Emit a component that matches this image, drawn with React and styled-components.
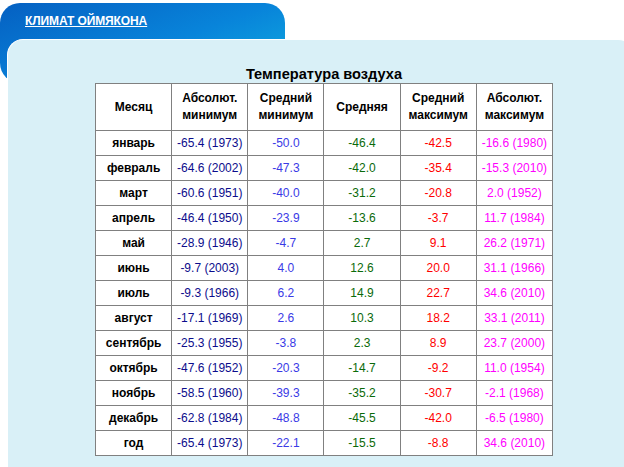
import styled, { createGlobalStyle } from 'styled-components';

const GlobalStyle = createGlobalStyle`
    html, body {
        margin: 0;
        padding: 0;
        background: #ffffff;
        overflow: hidden;
    }
    body {
        font-family: "Liberation Sans", Arial, sans-serif;
    }
`;

const Page = styled.div`
    width: 624px;
    height: 467px;
    padding-top: 3px;
    box-sizing: border-box;
    overflow: hidden;
`;

const Tab = styled.div`
    width: 285px;
    height: 80px;
    box-sizing: border-box;
    padding: 8px 0 0 25px;
    border-radius: 20px;
    background: linear-gradient(160deg, #0560c2 0%, #0884da 55%, #10aee0 100%);
`;

const TabLink = styled.a`
    color: #ffffff;
    font-size: 12px;
    font-weight: bold;
    letter-spacing: -0.1px;
    text-decoration: underline;
`;

const Panel = styled.div`
    margin: -44px -10px 0 7px;
    padding: 26px 0 40px 87px;
    background: #d9f0f7;
    border-top: 1px solid #ffffff;
    border-left: 1px solid #ffffff;
    border-radius: 16px 16px 0 0;
`;

const TableBox = styled.div`
    width: 458px;
`;

const Title = styled.div`
    text-align: center;
    font-size: 14.6px;
    font-weight: bold;
    line-height: 17px;
    color: #000000;
`;

const Table = styled.table`
    width: 458px;
    border-collapse: collapse;
    table-layout: fixed;
    background: #ffffff;
    font-size: 12px;
`;

const Th = styled.th`
    border: 1px solid #808080;
    height: 46px;
    padding: 0 2px;
    font-weight: bold;
    line-height: 17px;
    color: #000000;
    text-align: center;
`;

const Td = styled.td`
    border: 1px solid #808080;
    height: 24px;
    padding: 0;
    text-align: center;
    color: ${(p) => p.$color || '#000000'};
    font-weight: ${(p) => (p.$bold ? 'bold' : 'normal')};
`;

const colors = ['#0c0c8c', '#3a3ae6', '#0a6a0a', '#ff0000', '#ff00ff'];

const headers = [
    ['Месяц'],
    ['Абсолют.', 'минимум'],
    ['Средний', 'минимум'],
    ['Средняя'],
    ['Средний', 'максимум'],
    ['Абсолют.', 'максимум'],
];

const rows = [
    ['январь', '-65.4 (1973)', '-50.0', '-46.4', '-42.5', '-16.6 (1980)'],
    ['февраль', '-64.6 (2002)', '-47.3', '-42.0', '-35.4', '-15.3 (2010)'],
    ['март', '-60.6 (1951)', '-40.0', '-31.2', '-20.8', '2.0 (1952)'],
    ['апрель', '-46.4 (1950)', '-23.9', '-13.6', '-3.7', '11.7 (1984)'],
    ['май', '-28.9 (1946)', '-4.7', '2.7', '9.1', '26.2 (1971)'],
    ['июнь', '-9.7 (2003)', '4.0', '12.6', '20.0', '31.1 (1966)'],
    ['июль', '-9.3 (1966)', '6.2', '14.9', '22.7', '34.6 (2010)'],
    ['август', '-17.1 (1969)', '2.6', '10.3', '18.2', '33.1 (2011)'],
    ['сентябрь', '-25.3 (1955)', '-3.8', '2.3', '8.9', '23.7 (2000)'],
    ['октябрь', '-47.6 (1952)', '-20.3', '-14.7', '-9.2', '11.0 (1954)'],
    ['ноябрь', '-58.5 (1960)', '-39.3', '-35.2', '-30.7', '-2.1 (1968)'],
    ['декабрь', '-62.8 (1984)', '-48.8', '-45.5', '-42.0', '-6.5 (1980)'],
    ['год', '-65.4 (1973)', '-22.1', '-15.5', '-8.8', '34.6 (2010)'],
];

const App = () => {
    return (
        <Page>
            <GlobalStyle />
            <Tab>
                <TabLink href="#">КЛИМАТ ОЙМЯКОНА</TabLink>
            </Tab>
            <Panel>
                <TableBox>
                    <Title>Температура воздуха</Title>
                    <Table>
                        <thead>
                            <tr>
                                {headers.map((h, i) => (
                                    <Th key={i}>
                                        {h.map((line, j) => (
                                            <div key={j}>{line}</div>
                                        ))}
                                    </Th>
                                ))}
                            </tr>
                        </thead>
                        <tbody>
                            {rows.map((r) => (
                                <tr key={r[0]}>
                                    <Td $bold>{r[0]}</Td>
                                    {r.slice(1).map((v, i) => (
                                        <Td key={i} $color={colors[i]}>
                                            {v}
                                        </Td>
                                    ))}
                                </tr>
                            ))}
                        </tbody>
                    </Table>
                </TableBox>
            </Panel>
        </Page>
    );
};

export default App;
